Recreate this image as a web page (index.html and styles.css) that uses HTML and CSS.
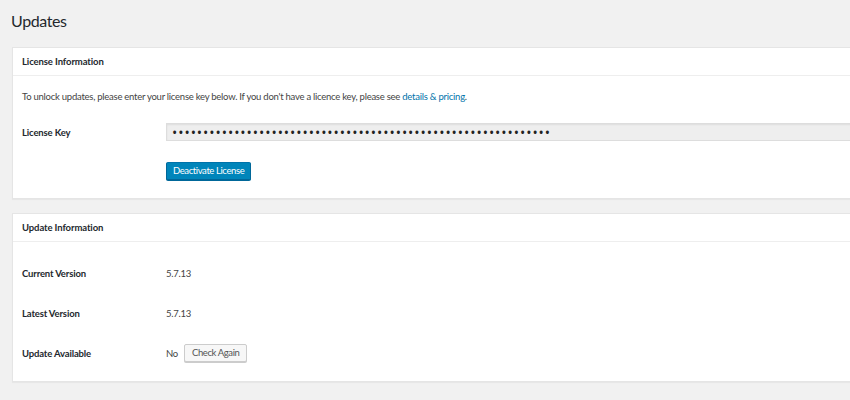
FILE: index.html
```html
<!DOCTYPE html>
<html lang="en">
<head>
    <meta charset="UTF-8">
    <title>Updates</title>
    <link rel="stylesheet" href="styles.css">
</head>
<body>
    <div class="wrap">
        <h1>Updates</h1>

        <div class="postbox">
            <h2 class="hndle">License Information</h2>
            <div class="inside">
                <p class="intro">To unlock updates, please enter your license key below. If you don't have a licence key, please see <a href="#">details &amp; pricing</a>.</p>
                <div class="form-row">
                    <div class="label">License Key</div>
                    <div class="field"><input type="password" class="key" value="aaaaaaaaaaaaaaaaaaaaaaaaaaaaaaaaaaaaaaaaaaaaaaaaaaaaaaaaaaaaa" readonly></div>
                </div>
                <div class="form-row submit-row">
                    <div class="label"></div>
                    <div class="field"><button class="button-primary">Deactivate License</button></div>
                </div>
            </div>
        </div>

        <div class="postbox">
            <h2 class="hndle">Update Information</h2>
            <div class="inside info">
                <div class="form-row">
                    <div class="label">Current Version</div>
                    <div class="field">5.7.13</div>
                </div>
                <div class="form-row">
                    <div class="label">Latest Version</div>
                    <div class="field">5.7.13</div>
                </div>
                <div class="form-row">
                    <div class="label">Update Available</div>
                    <div class="field">No <button class="button">Check Again</button></div>
                </div>
            </div>
        </div>
    </div>
</body>
</html>
```

FILE: styles.css
```css
body {
    margin: 0;
    background: #f1f1f1;
    color: #444;
    font-family: Lato, "Open Sans", sans-serif;
    font-size: 9.5px;
    letter-spacing: -0.25px;
    overflow: hidden;
}

.wrap {
    width: 860px;
    padding: 9px 0 0 12px;
}

h1 {
    margin: 0 0 0 -1px;
    height: 38px;
    font-size: 16px;
    font-weight: 400;
    line-height: 24px;
    letter-spacing: -0.4px;
    color: #23282d;
}

.postbox {
    background: #fff;
    border: 1px solid #e5e5e5;
    box-shadow: 0 1px 1px rgba(0, 0, 0, 0.04);
    margin-bottom: 14px;
}

.hndle {
    margin: 0;
    height: 27px;
    padding: 0 9px;
    line-height: 27px;
    font-size: 9.5px;
    font-weight: 700;
    letter-spacing: -0.1px;
    color: #23282d;
    border-bottom: 1px solid #eee;
}

.inside {
    padding: 12px 9px 18px;
}

.intro {
    margin: 0 0 6px;
    line-height: 18px;
}

.intro a {
    color: #0073aa;
    text-decoration: none;
}

.form-row {
    display: flex;
    align-items: center;
    height: 40px;
}

.label {
    width: 144px;
    font-weight: 700;
    letter-spacing: -0.15px;
    color: #23282d;
}

.field {
    flex: 1;
    display: flex;
    align-items: center;
    gap: 6px;
}

.key {
    width: 100%;
    height: 18px;
    box-sizing: border-box;
    margin: 0;
    padding: 0 5px;
    background: #eee;
    border: 1px solid #ddd;
    box-shadow: inset 0 1px 2px rgba(0, 0, 0, 0.07);
    font-family: "Open Sans", sans-serif;
    font-size: 14px;
    color: #222;
    letter-spacing: 0.95px;
    outline: none;
}

.submit-row {
    height: 28px;
    align-items: flex-end;
}

.button-primary,
.button {
    height: 18px;
    padding: 0 6px;
    border-radius: 2px;
    font-family: inherit;
    font-size: 9.5px;
    letter-spacing: -0.4px;
    line-height: 16px;
    cursor: pointer;
}

.button-primary {
    background: #0085ba;
    border: 1px solid #0073aa;
    border-color: #0073aa #006799 #006799;
    box-shadow: 0 1px 0 #006799;
    color: #fff;
}

.button {
    padding: 0 7px;
    background: #f7f7f7;
    border: 1px solid #ccc;
    box-shadow: 0 1px 0 #ccc;
    color: #555;
}

.info {
    padding: 11px 9px 8px;
}
```
